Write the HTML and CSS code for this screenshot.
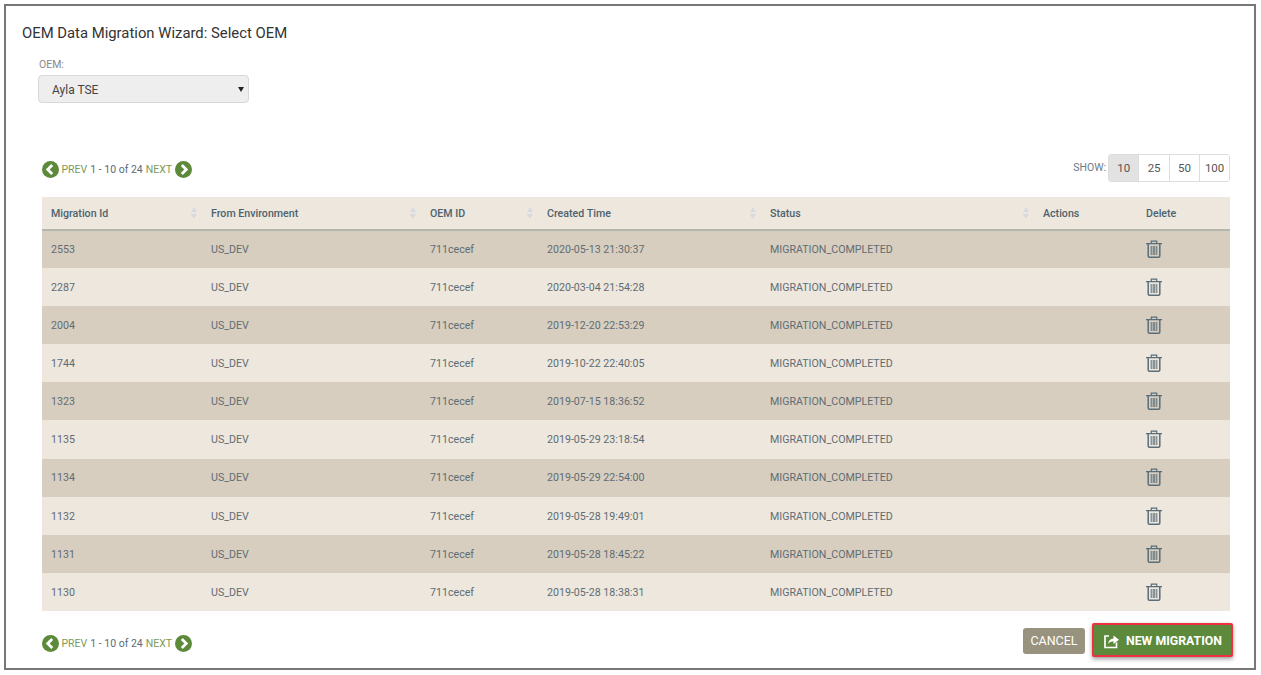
FILE: index.html
```html
<!DOCTYPE html>
<html lang="en">
<head>
<meta charset="utf-8">
<title>OEM Data Migration Wizard</title>
<link rel="stylesheet" href="styles.css">
</head>
<body>
<svg class="defs" width="0" height="0" aria-hidden="true">
  <symbol id="trash" viewBox="0 0 16 18">
    <path d="M0 3.6H16M5.3 3.6V1.1H10.7V3.6" fill="none" stroke="currentColor" stroke-width="1.2"/>
    <path d="M2.2 3.6V16Q2.2 17.2 3.4 17.2H12.6Q13.8 17.2 13.8 16V3.6" fill="none" stroke="currentColor" stroke-width="1.5"/>
    <path d="M5.2 6V15M7.2 6V15M8.8 6V15M10.8 6V15" fill="none" stroke="currentColor" stroke-width="1"/>
  </symbol>
  <symbol id="prev" viewBox="0 0 16 16">
    <circle cx="8" cy="8" r="8" fill="#5d8a3a"/>
    <path d="M9.6 3.8L5.4 8L9.6 12.2" fill="none" stroke="#fff" stroke-width="2.6"/>
  </symbol>
  <symbol id="next" viewBox="0 0 16 16">
    <circle cx="8" cy="8" r="8" fill="#5d8a3a"/>
    <path d="M6.4 3.8L10.6 8L6.4 12.2" fill="none" stroke="#fff" stroke-width="2.6"/>
  </symbol>
</svg>
<main class="frame">
  <h1 class="title">OEM Data Migration Wizard: Select OEM</h1>
  <div class="field">
    <label class="field-label" for="oem">OEM:</label>
    <div class="select"><span id="oem" class="select-value">Ayla TSE</span><span class="caret"></span></div>
  </div>
  <div class="toolbar">
    <div class="pager">
      <svg class="pager-icon"><use href="#prev"/></svg>
      <a class="pager-link">PREV</a> <span>1 - 10 of 24</span> <a class="pager-link">NEXT</a>
      <svg class="pager-icon"><use href="#next"/></svg>
    </div>
    <div class="show">
      <span class="show-label">SHOW:</span>
      <div class="show-group">
        <span class="show-btn is-active">10</span><span class="show-btn">25</span><span class="show-btn">50</span><span class="show-btn">100</span>
      </div>
    </div>
  </div>
  <table class="grid">
    <thead>
      <tr>
        <th class="c-id sortable">Migration Id</th>
        <th class="c-env sortable">From Environment</th>
        <th class="c-oem sortable">OEM ID</th>
        <th class="c-time sortable">Created Time</th>
        <th class="c-status sortable">Status</th>
        <th class="c-actions">Actions</th>
        <th class="c-del">Delete</th>
      </tr>
    </thead>
    <tbody>
      <tr><td>2553</td><td>US_DEV</td><td>711cecef</td><td>2020-05-13 21:30:37</td><td>MIGRATION_COMPLETED</td><td></td><td><svg class="trash"><use href="#trash"/></svg></td></tr>
      <tr><td>2287</td><td>US_DEV</td><td>711cecef</td><td>2020-03-04 21:54:28</td><td>MIGRATION_COMPLETED</td><td></td><td><svg class="trash"><use href="#trash"/></svg></td></tr>
      <tr><td>2004</td><td>US_DEV</td><td>711cecef</td><td>2019-12-20 22:53:29</td><td>MIGRATION_COMPLETED</td><td></td><td><svg class="trash"><use href="#trash"/></svg></td></tr>
      <tr><td>1744</td><td>US_DEV</td><td>711cecef</td><td>2019-10-22 22:40:05</td><td>MIGRATION_COMPLETED</td><td></td><td><svg class="trash"><use href="#trash"/></svg></td></tr>
      <tr><td>1323</td><td>US_DEV</td><td>711cecef</td><td>2019-07-15 18:36:52</td><td>MIGRATION_COMPLETED</td><td></td><td><svg class="trash"><use href="#trash"/></svg></td></tr>
      <tr><td>1135</td><td>US_DEV</td><td>711cecef</td><td>2019-05-29 23:18:54</td><td>MIGRATION_COMPLETED</td><td></td><td><svg class="trash"><use href="#trash"/></svg></td></tr>
      <tr><td>1134</td><td>US_DEV</td><td>711cecef</td><td>2019-05-29 22:54:00</td><td>MIGRATION_COMPLETED</td><td></td><td><svg class="trash"><use href="#trash"/></svg></td></tr>
      <tr><td>1132</td><td>US_DEV</td><td>711cecef</td><td>2019-05-28 19:49:01</td><td>MIGRATION_COMPLETED</td><td></td><td><svg class="trash"><use href="#trash"/></svg></td></tr>
      <tr><td>1131</td><td>US_DEV</td><td>711cecef</td><td>2019-05-28 18:45:22</td><td>MIGRATION_COMPLETED</td><td></td><td><svg class="trash"><use href="#trash"/></svg></td></tr>
      <tr><td>1130</td><td>US_DEV</td><td>711cecef</td><td>2019-05-28 18:38:31</td><td>MIGRATION_COMPLETED</td><td></td><td><svg class="trash"><use href="#trash"/></svg></td></tr>
    </tbody>
  </table>
  <div class="footer">
    <div class="pager pager-bottom">
      <svg class="pager-icon"><use href="#prev"/></svg>
      <a class="pager-link">PREV</a> <span>1 - 10 of 24</span> <a class="pager-link">NEXT</a>
      <svg class="pager-icon"><use href="#next"/></svg>
    </div>
    <div class="actions">
      <button class="btn btn-cancel" type="button">CANCEL</button>
      <button class="btn btn-primary" type="button">
        <svg class="btn-icon" viewBox="0 0 16 16"><path d="M6 3H2V14.5H13.5V9.5" fill="none" stroke="#fff" stroke-width="1.7"/><path d="M5 11C5.5 7.5 7.5 5.6 10.5 5.4V2.5L16 6.8L10.5 11V8.2C8.3 8.2 6.3 9 5 11Z" fill="#fff"/></svg>
        NEW MIGRATION
      </button>
    </div>
  </div>
</main>
</body>
</html>
```

FILE: styles.css
```css
* { box-sizing: border-box; }
html, body { margin: 0; height: 100%; background: #fff; }
body { padding: 4px 5px 5px 4px; font-family: Roboto, "Liberation Sans", sans-serif; color: #5a6b75; overflow: hidden; }
.defs { position: absolute; }
.frame { height: 666px; border: 2px solid #777; padding: 0 24px 0 36px; display: flex; flex-direction: column; }
.title { margin: 17px 0 0 -20px; font-size: 14.85px; line-height: 20px; font-weight: 400; color: #333; }
.field { margin-top: 15px; }
.field-label { display: block; font-size: 10.5px; line-height: 13px; color: #888; margin-left: -3px; }
.select { margin: 4px 0 0 -4px; width: 211px; height: 28px; background: #eee; border: 1px solid #d8d8d8; border-radius: 4px; padding-left: 13px; font-size: 12px; color: #444; display: flex; justify-content: space-between; align-items: center; }
.select-value { padding-top: 1px; }
.caret { width: 0; height: 0; margin-right: 4px; border-left: 3px solid transparent; border-right: 3px solid transparent; border-top: 5px solid #222; }
.toolbar { margin-top: 51px; height: 28px; display: flex; justify-content: space-between; align-items: center; }
.pager { display: flex; align-items: center; gap: 3px; font-size: 10.5px; color: #5a6b75; white-space: nowrap; margin: 2px 0 0 -0.5px; }
.pager-link { color: #7d9a5b; }
.pager-icon { width: 17px; height: 17px; }
.show { display: flex; align-items: center; gap: 2px; }
.show-label { font-size: 10.5px; color: #6b7a84; margin-bottom: 2px; }
.show-group { display: flex; border: 1px solid #ddd; border-radius: 3px; overflow: hidden; }
.show-btn { width: 30.4px; height: 26px; font-size: 11.5px; line-height: 26px; text-align: center; color: #555; background: #fff; border-right: 1px solid #ddd; }
.show-btn:last-child { width: 28.8px; border-right: 0; }
.show-btn.is-active { background: #e2e2e2; }
.grid { margin-top: 15px; width: 1188px; table-layout: fixed; border-collapse: collapse; font-size: 10.65px; }
.grid th { height: 33px; background: #ede7dd; border-bottom: 2px solid #b5b5b0; padding: 0 8px 0 9px; text-align: left; font-weight: 500; color: #4e626e; position: relative; }
.grid td { height: 38.1px; padding: 0 8px 0 9px; color: #5f6c74; }
.grid tbody tr:nth-child(n+8) td { padding-top: 2px; }
.grid tbody tr:nth-child(odd) { background: #d7cebf; }
.grid tbody tr:nth-child(even) { background: #ede7dd; }
.sortable::after { content: ""; position: absolute; right: 5px; top: 10px; width: 6.5px; height: 12px; background: #d5dade; clip-path: polygon(50% 0, 100% 42%, 0 42%, 0 58%, 100% 58%, 50% 100%, 0 58%); }
.c-id { width: 160px; }
.c-env { width: 219px; }
.c-oem { width: 117px; }
.c-time { width: 223px; }
.c-status { width: 273px; }
.c-actions { width: 103px; }
.c-del { width: 93px; }
.trash { display: block; width: 16px; height: 18px; color: #5a6e7a; margin-top: -1px; }
.footer { margin-top: 12px; display: flex; justify-content: space-between; align-items: flex-start; }
.pager-bottom { margin-top: 12px; }
.actions { display: flex; align-items: center; gap: 7px; margin-right: -3px; }
.btn { border: 0; height: 26px; border-radius: 3px; font-family: inherit; font-size: 12.5px; color: #fff; display: flex; align-items: center; justify-content: center; padding: 0; }
.btn-cancel { width: 62px; background: #98937f; font-weight: 400; margin-top: 2px; }
.btn-primary { width: 141px; height: 34px; padding-top: 2px; background: #5d8a3a; font-weight: 700; font-size: 12.3px; gap: 7px; border: 2px solid #f03040; border-radius: 2px; box-shadow: 0 2px 4px rgba(0,0,0,.4); }
.btn-icon { width: 16px; height: 16px; }
```
